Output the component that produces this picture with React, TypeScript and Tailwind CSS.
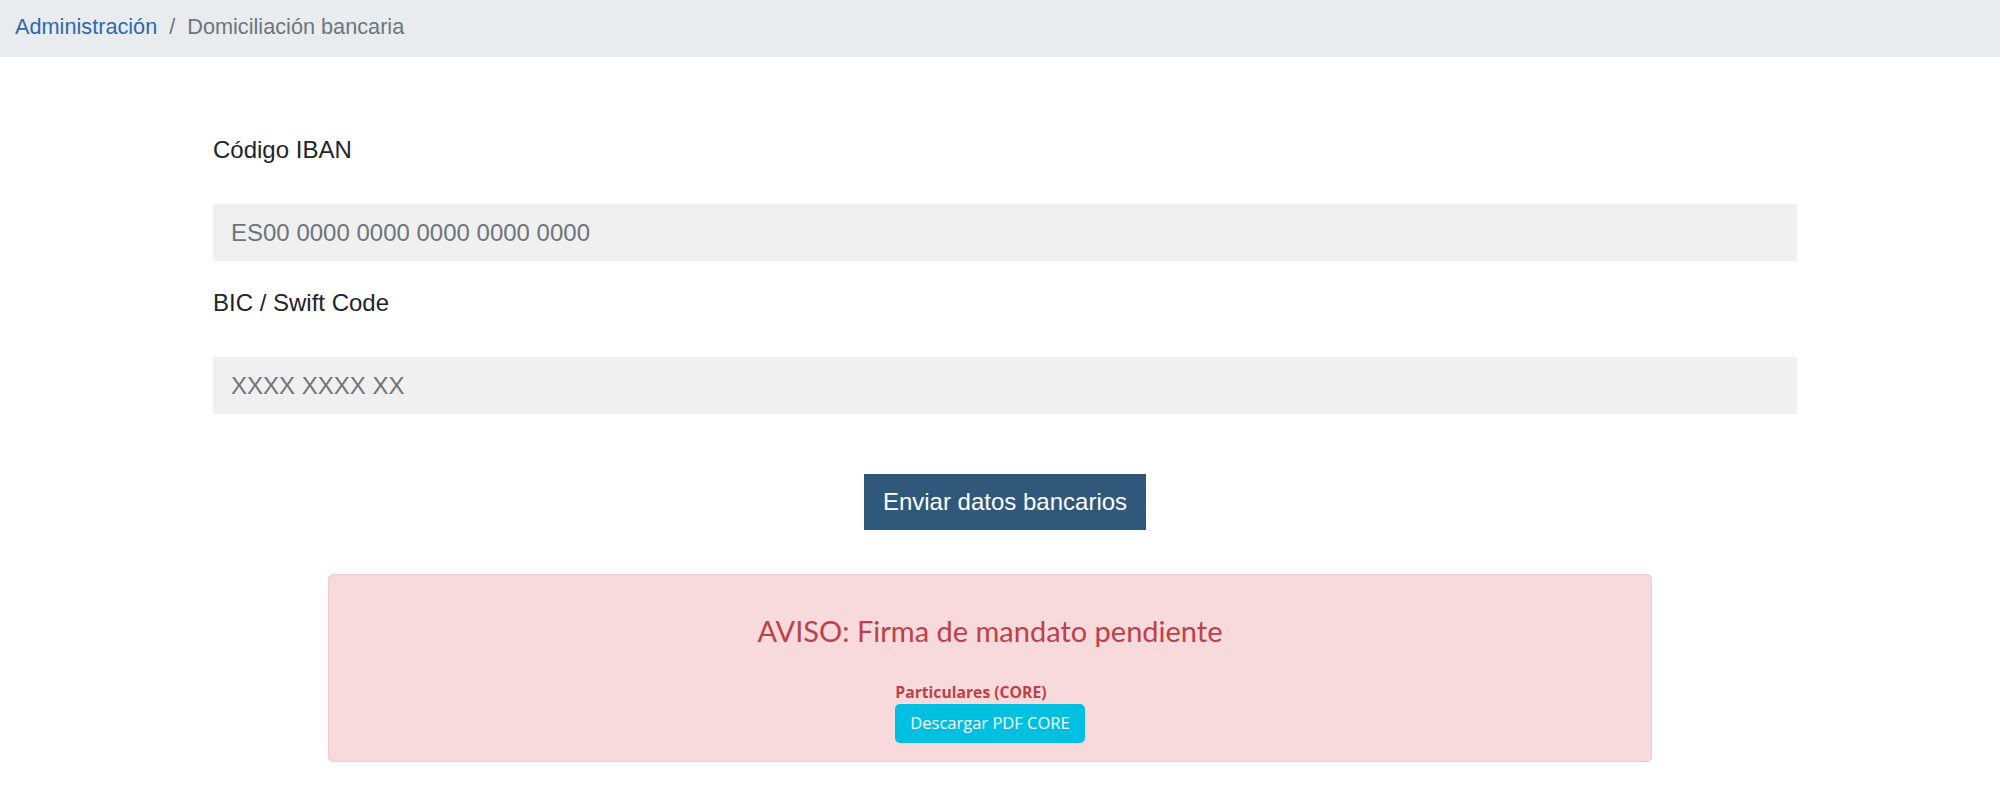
import React from 'react';

const sans = "font-['Liberation_Sans',Arial,sans-serif]";

export default function App() {
  return (
    <div className={`min-h-[810px] bg-white text-[#212529] ${sans}`}>
      {/* Breadcrumb */}
      <nav className="flex h-[57px] items-center bg-[#e9ecef] pb-[2px] pl-[15px] text-[21.7px]">
        <a href="#" className="text-[#2f69a8] no-underline">Administración</a>
        <span className="px-[12px] text-[#6c757d]">/</span>
        <span className="text-[#6c757d]">Domiciliación bancaria</span>
      </nav>

      {/* Form */}
      <form className="flex flex-col pl-[213px] pr-[203px] pt-[79px]" onSubmit={(e) => e.preventDefault()}>
        <label className="text-[24px] leading-[28px]">Código IBAN</label>
        <input
          className="mt-[40px] h-[57px] w-full bg-[#f0f0f0] px-[18px] text-[24px] outline-none placeholder:text-[#6c757d]"
          placeholder="ES00 0000 0000 0000 0000 0000"
        />
        <label className="mt-[28px] text-[24px] leading-[28px]">BIC / Swift Code</label>
        <input
          className="mt-[40px] h-[57px] w-full bg-[#f0f0f0] px-[18px] text-[24px] outline-none placeholder:text-[#6c757d]"
          placeholder="XXXX XXXX XX"
        />
        <div className="mt-[60px] flex justify-center">
          <button type="submit" className="h-[56px] bg-[#30587a] px-[19px] text-[24px] text-white">
            Enviar datos bancarios
          </button>
        </div>
      </form>

      {/* Aviso */}
      <div className="pl-[328px] pr-[348px] pt-[44px]">
        <div className="flex flex-col items-center rounded-[5px] border border-[#f5c6cb] bg-[#f8d9dc] pb-[18px] pt-[38px]">
          <h3 className="font-['Lato',sans-serif] text-[29px] font-normal leading-[35px] text-[#bf4046]">
            AVISO: Firma de mandato pendiente
          </h3>
          <div className="mt-[34px] flex flex-col items-start font-['Open_Sans',sans-serif]">
            <span className="text-[15.7px] font-bold leading-[20px] text-[#bf4046]">Particulares (CORE)</span>
            <button className="mt-[2px] h-[39px] rounded-[5px] bg-[#00c0e2] px-[15px] text-[16.5px] text-white">
              Descargar PDF CORE
            </button>
          </div>
        </div>
      </div>
    </div>
  );
}
